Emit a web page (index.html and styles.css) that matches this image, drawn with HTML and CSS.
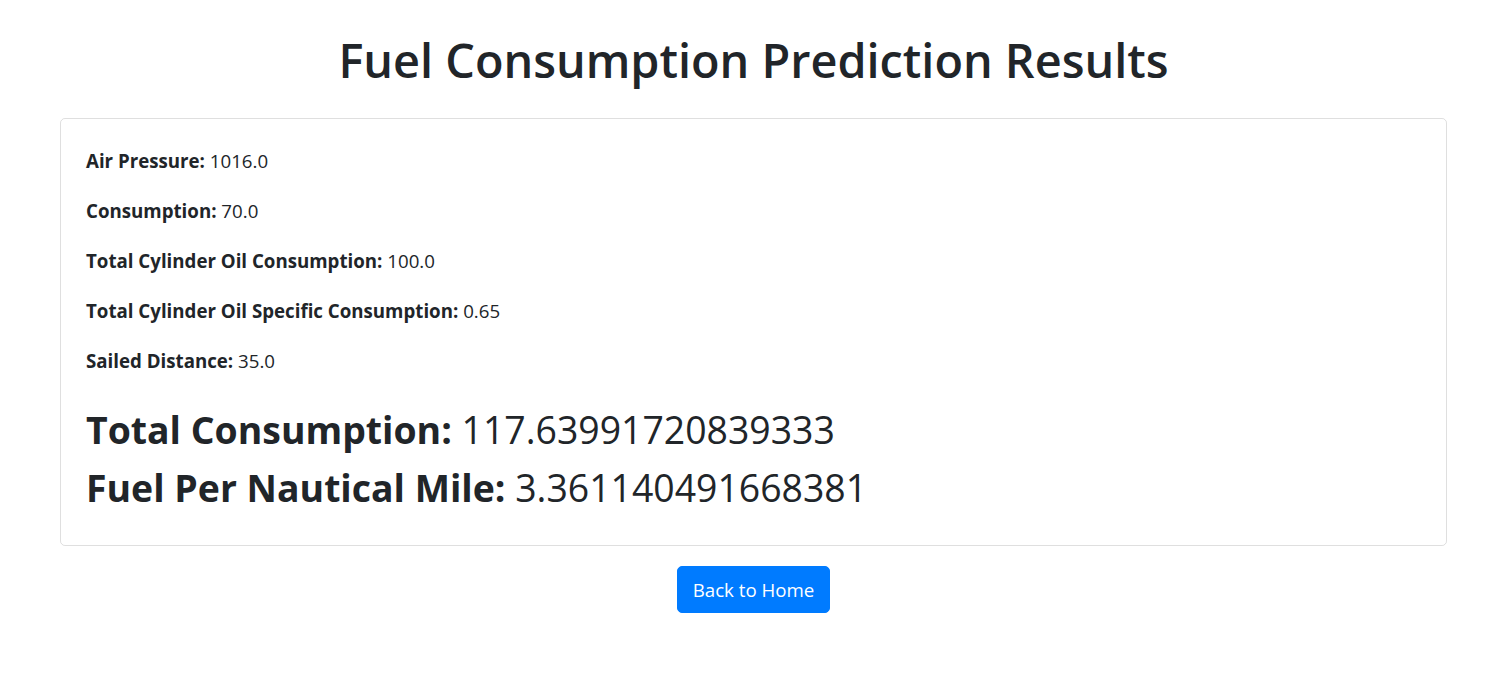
FILE: index.html
```html
<!DOCTYPE html>
<html lang="en">
<head>
<meta charset="utf-8">
<title>Fuel Consumption Prediction Results</title>
<link rel="stylesheet" href="styles.css">
</head>
<body>
<div class="page">
  <h1 class="title">Fuel Consumption Prediction Results</h1>
  <div class="card">
    <p class="row"><strong>Air Pressure:</strong> 1016.0</p>
    <p class="row"><strong>Consumption:</strong> 70.0</p>
    <p class="row"><strong>Total Cylinder Oil Consumption:</strong> 100.0</p>
    <p class="row"><strong>Total Cylinder Oil Specific Consumption:</strong> 0.65</p>
    <p class="row"><strong>Sailed Distance:</strong> 35.0</p>
    <div class="results">
      <h2 class="result"><strong>Total Consumption:</strong> 117.63991720839333</h2>
      <h2 class="result"><strong>Fuel Per Nautical Mile:</strong> 3.361140491668381</h2>
    </div>
  </div>
  <div class="actions">
    <a class="btn" href="#">Back to Home</a>
  </div>
</div>
</body>
</html>
```
FILE: styles.css
```css
* { box-sizing: border-box; }
html, body { margin: 0; padding: 0; background: #fff; }
body {
  font-family: "Open Sans", "Noto Sans", sans-serif;
  font-size: 18.7px;
  line-height: 1.5;
  color: #212529;
}
.page {
  padding: 30px 40px 0 60px;
}
.title {
  margin: 0 0 28px;
  font-size: 46.8px;
  font-weight: 600;
  line-height: 60px;
  text-align: center;
}
.card {
  border: 1px solid rgba(0,0,0,.125);
  border-radius: 5px;
  padding: 27px 25px 23px;
}
.row {
  margin: 0 0 20px;
  line-height: 30px;
}
.row strong { font-weight: 700; }
.results { padding-top: 10px; }
.result {
  margin: 0 0 10px;
  font-size: 37.4px;
  font-weight: 500;
  line-height: 48px;
}
.result strong { font-weight: 700; }
.actions {
  display: flex;
  justify-content: center;
  margin-top: 20px;
}
.btn {
  display: inline-block;
  background: #007bff;
  border: 1px solid #007bff;
  color: #fff;
  text-decoration: none;
  border-radius: 5px;
  padding: 7.5px 15px;
  line-height: 30px;
  font-size: 18.7px;
}
```
